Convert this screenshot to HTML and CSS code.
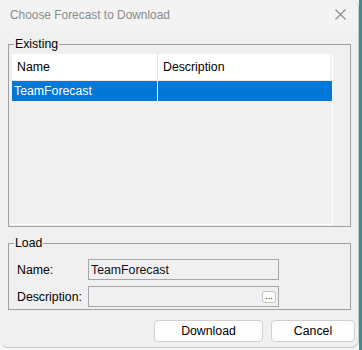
FILE: index.html
```html
<!DOCTYPE html>
<html>
<head>
<meta charset="utf-8">
<link rel="stylesheet" href="styles.css">
</head>
<body>
<div class="screen">
  <div class="window">
    <div class="titlebar">
      <span class="title">Choose Forecast to Download</span>
      <svg class="close" width="11" height="11" viewBox="0 0 11 11"><path d="M0.5 0.5 L10.5 10.5 M10.5 0.5 L0.5 10.5" stroke="#8a8a8a" stroke-width="1.1" fill="none"/></svg>
    </div>
    <div class="content">
      <fieldset class="group existing">
        <legend>Existing</legend>
        <div class="list">
          <div class="list-inner">
            <div class="row header">
              <div class="cell c1">Name</div>
              <div class="cell c2">Description</div>
            </div>
            <div class="row selected">
              <div class="cell c1">TeamForecast</div>
              <div class="cell c2"></div>
            </div>
          </div>
        </div>
      </fieldset>
      <fieldset class="group load">
        <legend>Load</legend>
        <div class="form-row">
          <span class="label">Name:</span>
          <div class="field">TeamForecast</div>
        </div>
        <div class="form-row">
          <span class="label">Description:</span>
          <div class="field browse"><span class="dots">...</span></div>
        </div>
      </fieldset>
      <div class="buttons">
        <div class="btn download">Download</div>
        <div class="btn cancel">Cancel</div>
      </div>
    </div>
  </div>
  <div class="desk"></div>
</div>
</body>
</html>
```
FILE: styles.css
```css
html, body {
  margin: 0;
  padding: 0;
}
body {
  width: 362px;
  height: 350px;
  background: #f6f6f6;
  font-family: "Liberation Sans", Arial, sans-serif;
  font-size: 12.3px;
  color: #000;
  overflow: hidden;
}
.screen {
  display: flex;
  height: 350px;
}
.desk {
  flex: 1;
  height: 350px;
  background: #3b8c9a;
}
.window {
  width: 359px;
  height: 348px;
  box-sizing: border-box;
  background: #f0f0f0;
  border: 1px solid #c9c9c9;
  border-left: none;
  border-top: none;
  border-radius: 0 8px 8px 8px;
  display: flex;
  flex-direction: column;
  overflow: hidden;
}
.titlebar {
  height: 31px;
  flex: none;
  background: #f3f3f3;
  display: flex;
  align-items: center;
  padding: 0 7px 0 10px;
}
.title {
  flex: 1;
  color: #8b8b8b;
  font-size: 11.9px;
  padding-bottom: 1px;
}
.close {
  display: block;
  margin-right: 5px;
  margin-bottom: 2px;
}
.content {
  display: flex;
  flex-direction: column;
  padding: 0 7px 0 8px;
}
.group {
  margin: 0;
  border: 1px solid #a0a0a0;
  padding: 3px 16px 1px 3px;
  min-width: 0;
}
.group legend {
  padding: 0 1px;
  margin-left: 2px;
  line-height: 14px;
  font-size: 12.3px;
}
.existing {
  margin-top: 6px;
}
.list {
  height: 171px;
  box-sizing: border-box;
  border-right: 1px solid #ffffff;
  border-bottom: 1px solid #ffffff;
  background: #f0f0f0;
  margin-right: 1px;
}
.list-inner {
  display: flex;
  flex-direction: column;
}
.row {
  display: flex;
}
.header {
  height: 26px;
  background: #ffffff;
  border-bottom: 1px solid #e8e8e8;
  margin-right: 2px;
}
.header .cell {
  padding-left: 5px;
}
.header .c1 {
  border-right: 1px solid #e5e5e5;
}
.selected {
  height: 20px;
  background: #0078d7;
  color: #ffffff;
}
.selected .c1 {
  padding-left: 2px;
  border-right: 1px solid #ffffff;
}
.cell {
  display: flex;
  align-items: center;
  box-sizing: border-box;
}
.c1 {
  width: 146px;
}
.c2 {
  flex: 1;
}
.load {
  margin-top: 9px;
  padding: 9px 16px 2px 3px;
  display: flex;
  flex-direction: column;
  gap: 6px;
}
.form-row {
  display: flex;
  align-items: center;
  padding-left: 5px;
  height: 21px;
}
.label {
  width: 71px;
  flex: none;
}
.field {
  width: 191px;
  height: 21px;
  box-sizing: border-box;
  border: 1px solid #a7a7ab;
  background: #f0f0f0;
  display: flex;
  align-items: center;
  padding-left: 2px;
  color: #101020;
}
.browse {
  justify-content: flex-end;
  padding-right: 2px;
  padding-top: 1px;
}
.dots {
  width: 14px;
  height: 12px;
  box-sizing: border-box;
  border: 1px solid #c4c4c4;
  border-radius: 3px;
  background: #fbfbfb;
  font-size: 9px;
  line-height: 9px;
  text-align: center;
  color: #222;
}
.buttons {
  display: flex;
  justify-content: flex-end;
  gap: 8px;
  margin-top: 10px;
  margin-right: -4px;
}
.btn {
  height: 22px;
  box-sizing: border-box;
  border: 1px solid #d0d0d0;
  border-radius: 4px;
  background: #fdfdfd;
  display: flex;
  align-items: center;
  justify-content: center;
}
.download {
  width: 109px;
}
.cancel {
  width: 84px;
}
```
